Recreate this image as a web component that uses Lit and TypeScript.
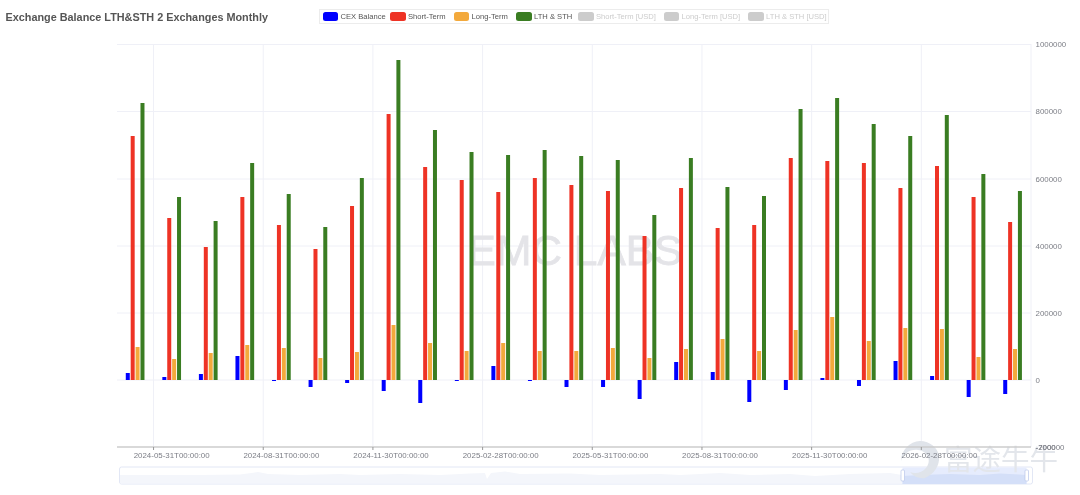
import { LitElement, html, css, svg } from "lit";
import { customElement } from "lit/decorators.js";

const Y0 = 380;
const GREEN = [103,197,221,163,194,227,178,60,130,152,155,150,156,160,215,158,187,196,109,98,124,136,115,174,191];
const RED = [136,218,247,197,225,249,206,114,167,180,192,178,185,191,236,188,228,225,158,161,163,188,166,197,222];
const ORANGE = [347,359,353,345,348,358,352,325,343,351,343,351,351,348,358,349,339,351,330,317,341,328,329,357,349];
const BLUE = [373,377,374,356,381,387,383,391,403,381,366,381,387,387,399,362,372,402,390,378,386,361,376,397,394];
const COL = { blue: "#0000ff", red: "#ee3325", orange: "#f3a93c", green: "#3a7d22" };
const HLINES = [44.5, 111.5, 179, 246, 313, 380];
const YL = ["1000000", "800000", "600000", "400000", "200000", "0"];
const TICKS = [
  ["2024-05-31T00:00:00", 1], ["2024-08-31T00:00:00", 4], ["2024-11-30T00:00:00", 7], ["2025-02-28T00:00:00", 10],
  ["2025-05-31T00:00:00", 13], ["2025-08-31T00:00:00", 16], ["2025-11-30T00:00:00", 19], ["2026-02-28T00:00:00", 22],
] as [string, number][];
const LEGEND = [
  ["CEX Balance", COL.blue, 1], ["Short-Term", COL.red, 1], ["Long-Term", COL.orange, 1], ["LTH & STH", COL.green, 1],
  ["Short-Term [USD]", "#cccccc", 0], ["Long-Term [USD]", "#cccccc", 0], ["LTH & STH [USD]", "#cccccc", 0],
] as [string, string, number][];
const AREA = "M120 475 L200 475 L240 474.5 L258 472 L268 474 L300 475 L340 474 L360 475 L400 474 L440 475 L470 473.5 L485 473 L487 479 L491 473 L505 471.5 L520 474 L570 473.5 L600 475 L660 474 L680 475 L720 473 L750 475 L790 474 L815 476 L850 474 L890 473 L902 475 L902 483.5 L120 483.5 Z";

function bar(x: number, top: number, color: string) {
  const y = Math.min(top, Y0), h = Math.max(Math.abs(top - Y0), 1);
  return svg`<rect x=${x} y=${y} width="4" height=${h} fill=${color} />`;
}

@customElement("app-root")
export class AppRoot extends LitElement {
  static styles = css`
    :host { display: block; width: 1080px; height: 495px; position: relative; overflow: hidden; background: #fff; font-family: "Liberation Sans", Arial, sans-serif; filter: blur(0.3px); }
    .head { display: flex; align-items: flex-start; height: 30px; }
    .title { font-size: 10.85px; font-weight: 700; color: #555; margin: 10.5px 0 0 5.5px; width: 313.5px; white-space: nowrap; }
    .legend { display: grid; grid-template-columns: 67.5px 63.5px 62.5px 62px 85.5px 84.6px 1fr; height: 15.5px; margin-top: 8.5px; border: 1px solid #ececec; box-sizing: border-box; align-items: center; padding-left: 2.5px; width: 510px; }
    .item { display: flex; align-items: center; gap: 2.5px; font-size: 7.6px; color: #555; white-space: nowrap; }
    .item.off { color: #ccc; }
    .sw { width: 15.5px; height: 9px; border-radius: 2.5px; flex: none; }
    svg.chart { position: absolute; left: 0; top: 0; }
    .axis { font-size: 7.9px; fill: #7c7e86; font-family: "Liberation Sans", Arial, sans-serif; }
    .emc { font-size: 42.5px; fill: #e4e4e8; stroke: #e4e4e8; stroke-width: .8px; font-family: "Liberation Sans", Arial, sans-serif; }
    .futu { font-size: 28.5px; font-weight: 400; fill: #e3e6eb; font-family: "Noto Sans CJK SC", sans-serif; }
  `;

  render() {
    return html`
      <div class="head">
        <div class="title">Exchange Balance LTH&amp;STH 2 Exchanges Monthly</div>
        <div class="legend">
          ${LEGEND.map(([t, c, on]) => html`<div class="item ${on ? "" : "off"}"><span class="sw" style="background:${c}"></span>${t}</div>`)}
        </div>
      </div>
      <svg class="chart" width="1080" height="495" viewBox="0 0 1080 495">
        ${HLINES.map((y) => svg`<line x1="117" x2="1031" y1=${y} y2=${y} stroke="#eff0f7" />`)}
        ${TICKS.map(([, k]) => { const x = 117 + 36.56 * k; return svg`<line x1=${x} x2=${x} y1="44" y2="447" stroke="#eff0f7" />`; })}
        <line x1="1031" x2="1031" y1="44" y2="447" stroke="#eff0f7" />
        <text class="emc" x="575" y="265" text-anchor="middle">EMC LABS</text>
        ${GREEN.map((_, i) => {
          const c = 135.28 + 36.56 * i;
          return svg`${bar(c - 9.5, BLUE[i], COL.blue)}${bar(c - 4.6, RED[i], COL.red)}${bar(c + 0.3, ORANGE[i], COL.orange)}${bar(c + 5.2, GREEN[i], COL.green)}`;
        })}
        <rect x="119.5" y="467" width="913" height="17" rx="2" fill="#fff" stroke="#e2e7f5" />
        <path d=${AREA} fill="#f4f6fb" />
        <rect x="902.5" y="467.5" width="124" height="16.5" fill="#e6ecfd" />
        <path d="M902.5 476 L920 475 L950 474 L980 475 L1000 473.5 L1026.5 475 L1026.5 484 L902.5 484 Z" fill="#d4dff8" />
        <path d="M920 441 A20 20 0 0 0 901 461 C903 454 910 449 918 450 C928 451 932 461 926 468 C922 473 915 474 910 472 C914 477 920 479 925 478 C934 474 940 466 939 456 C938 448 930 441 920 441 Z" fill="#e0e4ea" />
        <text class="futu" x="944" y="470">富途牛牛</text>
        <line x1="117" x2="1031" y1="447" y2="447" stroke="#cccccc" stroke-width="1.5" />
        ${TICKS.map(([t, k]) => { const x = 117 + 36.56 * k; return svg`
          <line x1=${x} x2=${x} y1="447" y2="450" stroke="#999" />
          <text class="axis" x=${x + 18.1} y="458" text-anchor="middle">${t}</text>`; })}
        ${YL.map((t, i) => svg`<text class="axis" x="1035.5" y=${HLINES[i] + 2.5}>${t}</text>`)}
        <text class="axis" x="1035.5" y="449.5">-200000</text>
        <text class="axis" x="1035.5" y="449.5">-7000</text>
        <rect x="901" y="470" width="3.5" height="11" rx="1" fill="#fff" stroke="#b9c6ea" stroke-width=".7" />
        <rect x="1025" y="470" width="3.5" height="11" rx="1" fill="#fff" stroke="#b9c6ea" stroke-width=".7" />
      </svg>
    `;
  }
}
